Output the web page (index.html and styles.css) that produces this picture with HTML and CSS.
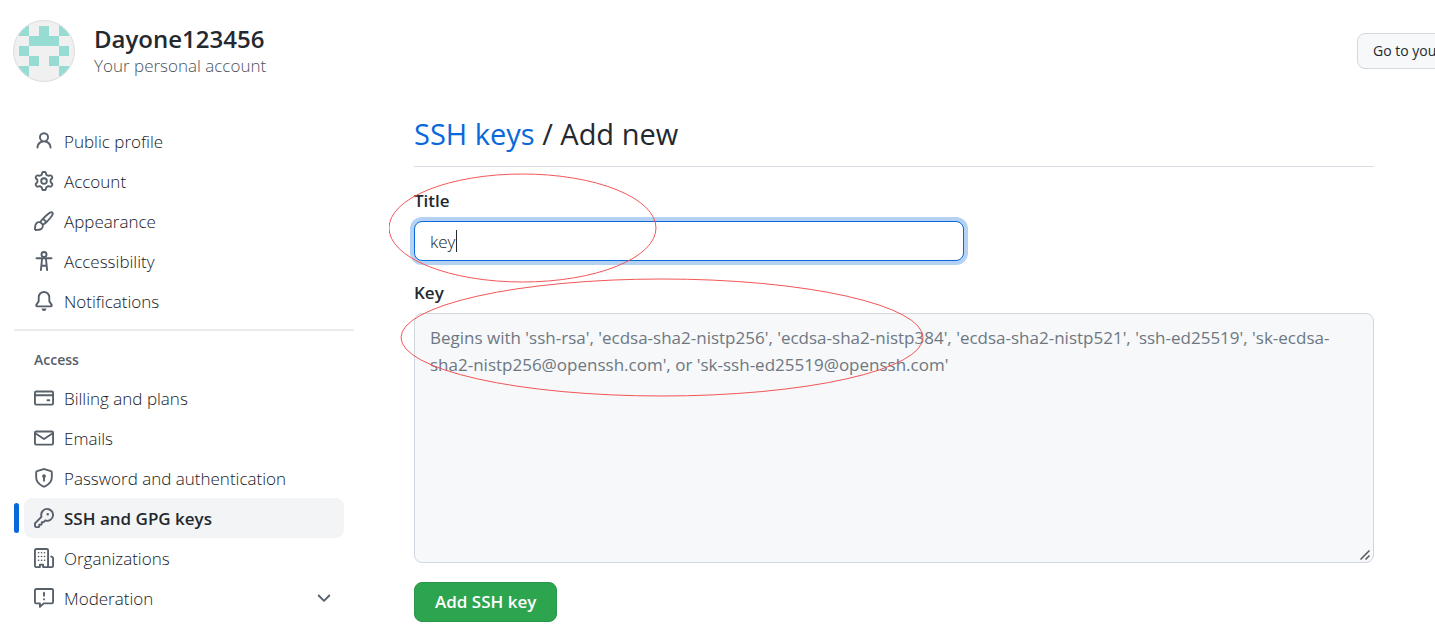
FILE: index.html
```html
<!DOCTYPE html>
<html lang="en">
<head>
<meta charset="utf-8">
<title>Add new SSH key</title>
<link rel="stylesheet" href="styles.css">
</head>
<body>
<header class="account-header">
  <svg class="avatar" viewBox="0 0 62 62" aria-hidden="true">
    <defs><clipPath id="round"><circle cx="31" cy="31" r="30"/></clipPath></defs>
    <circle cx="31" cy="31" r="30.500" fill="#f0f0f0" stroke="#dcddde"/>
    <path clip-path="url(#round)" fill="#96dcd3" d="M6 6h10v10H6zM26 6h10v10H26zM46 6h10v10H46zM16 16h30v10H16zM6 26h10v10H6zM46 26h10v10H46zM16 36h10v10H16zM36 36h10v10H36zM6 46h10v10H6zM46 46h10v10H46z"/>
  </svg>
  <div class="account-text">
    <div class="account-name">Dayone123456</div>
    <div class="account-kind">Your personal account</div>
  </div>
  <div class="header-action"><button class="profile-button" type="button">Go to your</button></div>
</header>
<div class="layout">
  <nav class="sidebar" aria-label="Settings">
    <ul class="nav-list">
      <li><a class="nav-item" href="#"><svg class="icon" viewBox="0 0 16 16"><path d="M10.5 5a2.5 2.5 0 11-5 0 2.500 2.500 0 015 0zm.061 3.073a4 4 0 10-5.123 0 6.004 6.004 0 00-3.431 5.142.75.75 0 001.498.07 4.500 4.500 0 018.990 0 .75.75 0 101.498-.07 6.005 6.005 0 00-3.432-5.142z"/></svg><span class="nav-label">Public profile</span></a></li>
      <li><a class="nav-item" href="#"><svg class="icon" viewBox="0 0 16 16"><path fill-rule="evenodd" d="M7.429 1.525a6.593 6.593 0 011.142 0c.036.003.108.036.137.146l.289 1.105c.147.56.55.967.997 1.189.174.086.341.183.501.29.417.278.97.423 1.530.27l1.102-.303c.11-.03.175.016.195.046.219.31.41.641.573.989.014.031.022.11-.059.19l-.815.806c-.411.406-.562.957-.53 1.456a4.588 4.588 0 010 .582c-.032.499.119 1.050.53 1.456l.815.806c.08.08.073.159.059.19a6.494 6.494 0 01-.573.99c-.02.029-.086.074-.195.045l-1.103-.303c-.559-.153-1.112-.008-1.529.27-.16.107-.327.204-.5.29-.449.222-.851.628-.998 1.189l-.289 1.105c-.029.11-.101.143-.137.146a6.613 6.613 0 01-1.142 0c-.036-.003-.108-.037-.137-.146l-.289-1.105c-.147-.56-.55-.967-.997-1.189a4.502 4.502 0 01-.501-.29c-.417-.278-.97-.423-1.530-.27l-1.102.303c-.11.03-.175-.016-.195-.046a6.492 6.492 0 01-.573-.989c-.014-.031-.022-.11.059-.19l.815-.806c.411-.406.562-.957.53-1.456a4.587 4.587 0 010-.582c.032-.499-.119-1.050-.53-1.456l-.815-.806c-.08-.08-.073-.159-.059-.19a6.440 6.440 0 01.573-.99c.02-.029.086-.075.195-.045l1.103.303c.559.153 1.112.008 1.529-.27.16-.107.327-.204.5-.29.449-.222.851-.628.998-1.189l.289-1.105c.029-.11.101-.143.137-.146zM8 0c-.236 0-.47.01-.701.03-.743.065-1.290.615-1.458 1.261l-.29 1.106c-.017.066-.078.158-.211.224a5.994 5.994 0 00-.668.386c-.123.082-.233.09-.3.071L3.270 2.776c-.644-.177-1.392.02-1.820.63a7.977 7.977 0 00-.704 1.217c-.315.675-.111 1.422.363 1.891l.815.806c.05.048.098.147.088.294a6.084 6.084 0 000 .772c.01.147-.038.246-.088.294l-.815.806c-.474.469-.678 1.216-.363 1.891.2.428.436.835.704 1.218.428.609 1.176.806 1.820.63l1.103-.303c.066-.019.176-.011.299.071.213.143.436.272.668.386.133.066.194.158.212.224l.289 1.106c.169.646.715 1.196 1.458 1.260a8.094 8.094 0 001.402 0c.743-.064 1.290-.614 1.458-1.260l.29-1.106c.017-.066.078-.158.211-.224a5.980 5.980 0 00.668-.386c.123-.082.233-.09.3-.071l1.102.302c.644.177 1.392-.02 1.820-.63.268-.382.505-.789.704-1.217.315-.675.111-1.422-.364-1.891l-.814-.806c-.05-.048-.098-.147-.088-.294a6.100 6.100 0 000-.772c-.01-.147.039-.246.088-.294l.814-.806c.475-.469.679-1.216.364-1.891a7.992 7.992 0 00-.704-1.218c-.428-.609-1.176-.806-1.820-.63l-1.103.303c-.066.019-.176.011-.299-.071a5.991 5.991 0 00-.668-.386c-.133-.066-.194-.158-.212-.224L10.160 1.290C9.990.645 9.444.095 8.701.031A8.094 8.094 0 008 0zm1.500 8a1.500 1.500 0 11-3 0 1.500 1.500 0 013 0zM11 8a3 3 0 11-6 0 3 3 0 016 0z"/></svg><span class="nav-label">Account</span></a></li>
      <li><a class="nav-item" href="#"><svg class="icon" viewBox="0 0 16 16"><path fill-rule="evenodd" d="M11.134 1.535C9.722 2.562 8.160 4.057 6.889 5.312 5.800 6.387 5.041 7.401 4.575 8.294a3.745 3.745 0 00-3.227 1.054c-.43.431-.69 1.066-.86 1.657a11.982 11.982 0 00-.358 1.914A21.263 21.263 0 000 15.203v.054l.75-.007-.007.75h.054a14.404 14.404 0 00.654-.012 21.243 21.243 0 001.630-.118c.62-.07 1.300-.18 1.914-.357.592-.17 1.226-.43 1.657-.861a3.745 3.745 0 001.055-3.217c.908-.461 1.942-1.216 3.040-2.300 1.279-1.262 2.764-2.825 3.775-4.249.501-.706.923-1.428 1.125-2.096.2-.659.235-1.469-.368-2.070-.606-.607-1.420-.55-2.069-.34-.66.213-1.376.646-2.076 1.155zm-3.950 8.480a3.760 3.760 0 00-1.190-1.192 9.758 9.758 0 011.161-1.607l1.658 1.658a9.853 9.853 0 01-1.630 1.142zM12.016 2.749c-1.224.89-2.605 2.189-3.822 3.384l1.718 1.718c1.210-1.205 2.510-2.597 3.387-3.833.47-.662.78-1.227.912-1.662.134-.444.032-.551.009-.575-.014-.014-.112-.113-.548.027-.432.14-.995.462-1.655.942zM1.620 13.089a19.560 19.560 0 00-.104 1.395 19.550 19.550 0 001.396-.104 10.528 10.528 0 001.668-.309c.526-.151.856-.325 1.011-.48a2.250 2.250 0 00-3.182-3.182c-.155.155-.329.485-.48 1.010a10.515 10.515 0 00-.309 1.670z"/></svg><span class="nav-label">Appearance</span></a></li>
      <li><a class="nav-item" href="#"><svg class="icon line" viewBox="0 0 16 16"><circle cx="8" cy="2.750" r="2"/><path d="M2 5.750h12M6.500 5.750L5.500 15.250M9.500 5.750l1 9.500M6 11.750h4"/></svg><span class="nav-label">Accessibility</span></a></li>
      <li><a class="nav-item" href="#"><svg class="icon" viewBox="0 0 16 16"><path d="M8 16a2 2 0 001.985-1.750c.017-.137-.097-.25-.235-.25h-3.500c-.138 0-.252.113-.235.25A2 2 0 008 16z"/><path fill-rule="evenodd" d="M8 1.500A3.500 3.500 0 004.500 5v2.947c0 .346-.102.683-.294.97L2.500 11.500h11l-1.706-2.583a1.750 1.750 0 01-.294-.97V5A3.500 3.500 0 008 1.500zM3 5a5 5 0 0110 0v2.947c0 .05.015.098.042.139l1.703 2.555A1.518 1.518 0 0113.482 13H2.518a1.518 1.518 0 01-1.263-2.360l1.703-2.554A.25.25 0 003 7.947V5z"/></svg><span class="nav-label">Notifications</span></a></li>
    </ul>
    <div class="divider"></div>
    <h2 class="nav-heading">Access</h2>
    <ul class="nav-list">
      <li><a class="nav-item" href="#"><svg class="icon line" viewBox="0 0 16 16"><rect x=".75" y="2.750" width="14.500" height="10.500" rx="1"/><path d="M1 5.750h14M10.750 9.750h1.500"/></svg><span class="nav-label">Billing and plans</span></a></li>
      <li><a class="nav-item" href="#"><svg class="icon line" viewBox="0 0 16 16"><rect x=".75" y="2.750" width="14.500" height="10.500" rx="1"/><path d="M1 4.250l7 4.500 7-4.500"/></svg><span class="nav-label">Emails</span></a></li>
      <li><a class="nav-item" href="#"><svg class="icon" viewBox="0 0 16 16"><path fill-rule="evenodd" d="M7.467.133a1.750 1.750 0 011.066 0l5.250 1.680A1.750 1.750 0 0115 3.480V7c0 1.566-.32 3.182-1.303 4.682-.983 1.498-2.585 2.813-5.032 3.855a1.700 1.700 0 01-1.330 0c-2.447-1.042-4.049-2.357-5.032-3.855C1.320 10.182 1 8.566 1 7V3.480a1.750 1.750 0 011.217-1.667l5.250-1.680zm.61 1.429a.25.25 0 00-.153 0l-5.250 1.680a.25.25 0 00-.174.238V7c0 1.358.275 2.666 1.057 3.860.784 1.194 2.121 2.340 4.366 3.297a.2.2 0 00.154 0c2.245-.956 3.582-2.104 4.366-3.298C13.225 9.666 13.500 8.360 13.500 7V3.480a.25.25 0 00-.174-.237l-5.250-1.680zM9.500 6.500a1.500 1.500 0 01-.75 1.300v2.450a.75.75 0 01-1.500 0V7.800A1.500 1.500 0 119.500 6.500z"/></svg><span class="nav-label">Password and authentication</span></a></li>
      <li class="current"><a class="nav-item" href="#" aria-current="page"><svg class="icon" viewBox="0 0 16 16"><path fill-rule="evenodd" d="M6.500 5.500a4 4 0 112.731 3.795.75.75 0 00-.768.18L7.440 10.500H6.250a.75.75 0 00-.75.75v1.190l-.06.06H4.250a.75.75 0 00-.75.75v1.190l-.06.06H1.750a.25.25 0 01-.25-.25v-1.690l5.024-5.023a.75.75 0 00.181-.768A3.995 3.995 0 016.500 5.500zm4-5.500a5.500 5.500 0 00-5.348 6.788L.22 11.720a.75.75 0 00-.22.53v2C0 15.216.784 16 1.750 16h2a.75.75 0 00.53-.22l.5-.5a.75.75 0 00.22-.53V14h.75a.75.75 0 00.53-.22l.5-.5a.75.75 0 00.22-.53V12h.75a.75.75 0 00.53-.22l.932-.932A5.500 5.500 0 1010.500 0zm.5 6a1 1 0 100-2 1 1 0 000 2z"/></svg><span class="nav-label">SSH and GPG keys</span></a></li>
      <li><a class="nav-item" href="#"><svg class="icon line" viewBox="0 0 16 16"><path d="M4.750 15.250h-3a1 1 0 01-1-1V1.750a1 1 0 011-1h8.500a1 1 0 011 1v12.500a1 1 0 01-1 1h-3v-2h-2.500v2zM10.750 15.250h3.500a1 1 0 001-1V8.285a1 1 0 00-.45-.83L13.750 6.750"/><path stroke-width="1.300" d="M3.600 3.750h.1M6 3.750h.1M8.400 3.750h.1M3.600 6.750h.1M6 6.750h.1M8.400 6.750h.1M3.600 9.750h.1M6 9.750h.1M8.400 9.750h.1"/></svg><span class="nav-label">Organizations</span></a></li>
      <li><a class="nav-item" href="#"><svg class="icon line" viewBox="0 0 16 16"><path d="M1.750.75h12.500a1 1 0 011 1v9.500a1 1 0 01-1 1h-6.500l-3 2.900v-2.900h-3a1 1 0 01-1-1v-9.500a1 1 0 011-1zM8 3.750v2.500M8 9v.1"/></svg><span class="nav-label">Moderation</span><svg class="icon chevron line" viewBox="0 0 16 16"><path d="M3.750 6L8 10.250 12.250 6"/></svg></a></li>
    </ul>
  </nav>
  <main class="content">
    <h1 class="page-title"><a class="title-link" href="#">SSH keys</a> / Add new</h1>
    <form class="key-form">
      <label class="field-label" for="title">Title</label>
      <input class="text-field" id="title" type="text" value="key" autofocus>
      <label class="field-label" for="key">Key</label>
      <div class="key-box">
        <textarea class="key-field" id="key" placeholder="Begins with 'ssh-rsa', 'ecdsa-sha2-nistp256', 'ecdsa-sha2-nistp384', 'ecdsa-sha2-nistp521', 'ssh-ed25519', 'sk-ecdsa-sha2-nistp256@openssh.com', or 'sk-ssh-ed25519@openssh.com'"></textarea>
        <svg class="grip" viewBox="0 0 10 10" aria-hidden="true"><path d="M.5 9.500l9-9M5.500 9.500l4-4"/></svg>
      </div>
      <button class="submit-button" type="button">Add SSH key</button>
      <svg class="marks" viewBox="0 0 540 230" aria-hidden="true"><ellipse cx="133.500" cy="55" rx="133.500" ry="54"/><ellipse cx="273" cy="164.500" rx="261" ry="58.500"/><path class="caret" d="M67.500 57v22"/></svg>
    </form>
  </main>
</div>
</body>
</html>
```
FILE: styles.css
```css
* { box-sizing: border-box; }

body {
  margin: 0;
  overflow: hidden;
  color: #24292f;
  background: #fff;
  font-family: "Open Sans", "Noto Sans", sans-serif;
  font-size: 17px;
  font-weight: 300;
  line-height: 26px;
}

a { color: inherit; text-decoration: none; }

button, input, textarea { font: inherit; }

.account-header {
  display: flex;
  align-items: center;
  padding: 20px 0 0 13px;
}

.avatar { width: 62px; height: 62px; margin-right: 19px; }

.account-name { font-size: 24px; font-weight: 600; line-height: 30px; }

.account-kind { color: #4b535c; line-height: 24px; }

.header-action { width: 78px; margin-left: auto; }

.profile-button {
  display: block;
  height: 36px;
  padding: 0 15px;
  border: 1px solid #d5d8da;
  border-radius: 8px;
  background: #f6f8fa;
  color: #24292f;
  font-size: 14px;
  font-weight: 500;
  white-space: nowrap;
}

.layout {
  display: grid;
  grid-template-columns: 340px 1fr;
  gap: 60px;
  padding: 30px 61px 0 14px;
}

.sidebar { padding-top: 9px; }

.nav-list { margin: 0; padding: 0 10px; list-style: none; }

.nav-item {
  display: flex;
  align-items: center;
  gap: 10px;
  height: 40px;
  padding: 0 10px;
  border-radius: 8px;
  color: #15191e;
}

.nav-label { padding-top: 2px; }

.current { position: relative; }

.current .nav-item { background: #f3f4f6; font-weight: 600; color: #24292f; }

.current::before {
  content: "";
  position: absolute;
  top: 5px;
  left: -10px;
  width: 5px;
  height: 30px;
  border-radius: 3px;
  background: #0969da;
}

.icon { width: 20px; height: 20px; fill: #57606a; }

.line {
  fill: none;
  stroke: #57606a;
  stroke-width: 1.5;
  stroke-linecap: round;
  stroke-linejoin: round;
}

.chevron { margin-left: auto; }

.divider { height: 2px; margin: 8px 0; background: #e9ebee; }

.nav-heading {
  margin: 0;
  padding: 9px 20px 6px;
  color: #57606a;
  font-size: 14px;
  font-weight: 600;
  line-height: 24px;
}

.page-title {
  margin: 0;
  padding-bottom: 10px;
  border-bottom: 1px solid #d8dee4;
  font-size: 29px;
  font-weight: 400;
  line-height: 44px;
}

.title-link { color: #0969da; }

.key-form {
  position: relative;
  display: flex;
  flex-direction: column;
  align-items: flex-start;
  padding-top: 21px;
}

.field-label { margin-bottom: 7px; font-weight: 600; }

.text-field {
  width: 550px;
  height: 40px;
  margin-bottom: 19px;
  padding: 0 15px;
  border: 1px solid #0969da;
  border-radius: 8px;
  outline: none;
  box-shadow: 0 0 0 4px #b5d2f4;
  color: #15191e;
  caret-color: transparent;
}

.key-box { position: relative; width: 100%; }

.key-field {
  display: block;
  width: 100%;
  height: 250px;
  padding: 10px 15px;
  border: 1px solid #d0d7de;
  border-radius: 8px;
  background: #f6f8fa;
  font-weight: 400;
  line-height: 27px;
  resize: none;
}

.key-field::placeholder { color: #6e7781; }

.grip {
  position: absolute;
  right: 4px;
  bottom: 3px;
  width: 10px;
  height: 10px;
  fill: none;
  stroke: #555;
  stroke-width: 1.5;
}

.submit-button {
  height: 40px;
  margin-top: 19px;
  padding: 0 20px;
  border: 1px solid #2a964a;
  border-radius: 8px;
  background: #2da44e;
  color: #fff;
  font-weight: 600;
}

.marks {
  position: absolute;
  top: 6px;
  left: -25px;
  width: 540px;
  height: 230px;
  fill: none;
  stroke: #f25555;
  pointer-events: none;
}

.caret { stroke: #24292f; }
```
